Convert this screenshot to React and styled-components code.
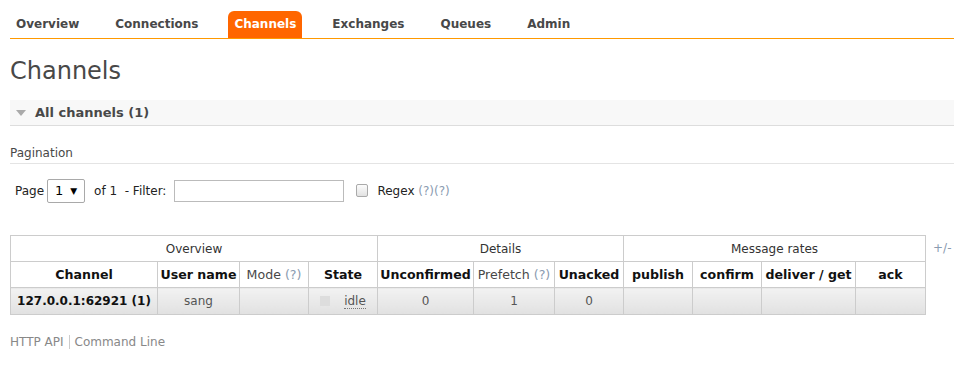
import React from 'react'
import styled, { createGlobalStyle } from 'styled-components'

const GlobalStyle = createGlobalStyle`
  body {
    margin: 0;
    background: #fff;
    font-family: "DejaVu Sans", Verdana, sans-serif;
    font-size: 12px;
    color: #484848;
  }
`

const Page = styled.div`
  padding: 11px 0 0 10px;
`

const Menu = styled.ul`
  display: flex;
  gap: 24px;
  margin: 0;
  padding: 0;
  list-style: none;
  border-bottom: 1px solid #f90;
`

const MenuItem = styled.li`
  padding: 0 6px;
  height: 27px;
  line-height: 26px;
  font-weight: bold;
  font-size: 12px;
  border-radius: 6px 6px 0 0;
  background: ${p => (p.$active ? '#f60' : 'transparent')};
  color: ${p => (p.$active ? '#fff' : '#484848')};
`

const Title = styled.h1`
  margin: 17px 0 0;
  font-size: 24px;
  font-weight: normal;
  line-height: 30px;
  color: #484848;
`

const SectionBar = styled.div`
  display: flex;
  align-items: center;
  gap: 9px;
  margin-top: 14px;
  height: 25px;
  padding-left: 6px;
  background: #f8f8f8;
  border-bottom: 1px solid #ddd;
  font-weight: bold;
  font-size: 13px;
`

const Arrow = styled.span`
  width: 0;
  height: 0;
  border-left: 5px solid transparent;
  border-right: 5px solid transparent;
  border-top: 6px solid #aaa;
`

const Subhead = styled.div`
  margin-top: 20px;
  padding-bottom: 3px;
  border-bottom: 1px solid #e4e4e4;
  font-size: 12px;
  color: #484848;
`

const Controls = styled.div`
  display: flex;
  align-items: center;
  margin: 14px 0 0 5px;
  height: 25px;
  color: #222;
  font-size: 12px;
`

const SelectBox = styled.div`
  display: flex;
  align-items: center;
  justify-content: space-between;
  box-sizing: border-box;
  width: 38px;
  height: 24px;
  margin: 0 9px 0 3px;
  padding: 0 7px 0 7px;
  border: 1px solid #a9a9a9;
  border-radius: 2px;
  font-size: 13px;
  color: #000;
`

const Caret = styled.span`
  font-size: 9px;
`

const FilterInput = styled.input`
  box-sizing: border-box;
  width: 170px;
  height: 22px;
  margin: 0 12px 0 8px;
  border: 1px solid #bbb;
  font: inherit;
`

const Check = styled.span`
  box-sizing: border-box;
  width: 12px;
  height: 13px;
  margin-right: 9px;
  border: 1px solid #aaa;
  border-radius: 2px;
  background: linear-gradient(#fcfcfc, #e2e2e2);
`

const Help = styled.span`
  color: #8a9bb0;
`

const TableRow = styled.div`
  display: flex;
  align-items: flex-start;
  margin-top: 32px;
`

const Table = styled.table`
  border-collapse: collapse;
  width: 915px;
  table-layout: fixed;
  font-size: 12px;
`

const GroupHead = styled.th`
  height: 25px;
  padding: 0;
  border: 1px solid #ccc;
  font-weight: normal;
  color: #333;
`

const ColHead = styled.th`
  height: 25px;
  padding: 0;
  border: 1px solid #ccc;
  font-weight: ${p => (p.$plain ? 'normal' : 'bold')};
  color: ${p => (p.$plain ? '#484848' : '#111')};
  font-size: 12.6px;
  white-space: nowrap;
`

const Cell = styled.td`
  height: 26px;
  padding: 0;
  border: 1px solid #ccc;
  text-align: center;
  white-space: nowrap;
  background: linear-gradient(#f2f2f2, #e1e1e1);
  color: ${p => (p.$strong ? '#111' : '#555')};
  font-weight: ${p => (p.$strong ? 'bold' : 'normal')};
  font-size: 12px;
`

const StateBox = styled.span`
  display: inline-block;
  width: 10px;
  height: 10px;
  margin-right: 14px;
  vertical-align: -1px;
  background: #ddd;
`

const Idle = styled.abbr`
  text-decoration: none;
  border-bottom: 1px dotted #777;
  color: #555;
`

const PlusMinus = styled.span`
  margin: 6px 0 0 7px;
  color: #8a9bb0;
  font-size: 12px;
`

const Footer = styled.div`
  display: flex;
  align-items: center;
  margin-top: 20px;
  color: #888;
  font-size: 12px;
`

const FooterLink = styled.span`
  padding: 0 5px;
  border-left: ${p => (p.$sep ? '1px solid #ccc' : 'none')};
  &:first-child { padding-left: 0; }
`

const menu = ['Overview', 'Connections', 'Channels', 'Exchanges', 'Queues', 'Admin']

const widths = [147, 82, 69, 69, 96, 81, 69, 69, 69, 94, 70]

export default function App() {
  return (
    <Page>
      <GlobalStyle />
      <Menu>
        {menu.map(m => (
          <MenuItem key={m} $active={m === 'Channels'}>{m}</MenuItem>
        ))}
      </Menu>
      <Title>Channels</Title>
      <SectionBar>
        <Arrow />
        All channels (1)
      </SectionBar>
      <Subhead>Pagination</Subhead>
      <Controls>
        Page
        <SelectBox>1 <Caret>▼</Caret></SelectBox>
        of 1&nbsp;&nbsp;- Filter:
        <FilterInput />
        <Check />
        Regex&nbsp;<Help>(?)(?)</Help>
      </Controls>
      <TableRow>
        <Table>
          <colgroup>
            {widths.map((w, i) => <col key={i} style={{ width: w }} />)}
          </colgroup>
          <thead>
            <tr>
              <GroupHead colSpan={4}>Overview</GroupHead>
              <GroupHead colSpan={3}>Details</GroupHead>
              <GroupHead colSpan={4}>Message rates</GroupHead>
            </tr>
            <tr>
              <ColHead>Channel</ColHead>
              <ColHead>User name</ColHead>
              <ColHead $plain>Mode <Help>(?)</Help></ColHead>
              <ColHead>State</ColHead>
              <ColHead>Unconfirmed</ColHead>
              <ColHead $plain>Prefetch <Help>(?)</Help></ColHead>
              <ColHead>Unacked</ColHead>
              <ColHead>publish</ColHead>
              <ColHead>confirm</ColHead>
              <ColHead>deliver / get</ColHead>
              <ColHead>ack</ColHead>
            </tr>
          </thead>
          <tbody>
            <tr>
              <Cell $strong>127.0.0.1:62921 (1)</Cell>
              <Cell>sang</Cell>
              <Cell />
              <Cell><StateBox /><Idle>idle</Idle></Cell>
              <Cell>0</Cell>
              <Cell>1</Cell>
              <Cell>0</Cell>
              <Cell />
              <Cell />
              <Cell />
              <Cell />
            </tr>
          </tbody>
        </Table>
        <PlusMinus>+/-</PlusMinus>
      </TableRow>
      <Footer>
        <FooterLink>HTTP API</FooterLink>
        <FooterLink $sep>Command Line</FooterLink>
      </Footer>
    </Page>
  )
}
